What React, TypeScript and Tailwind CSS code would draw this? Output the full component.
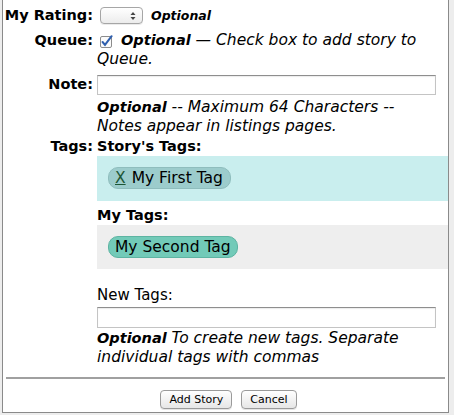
import React from 'react';

const font = { fontFamily: '"DejaVu Sans", Verdana, sans-serif' };

function SelectBox() {
  return (
    <div className="relative mt-[1px] ml-[3px] h-[17px] w-[43px] rounded-[4px] border border-[#a6a6a6] bg-gradient-to-b from-white to-[#ececec] shadow-[0_1px_0_rgba(0,0,0,0.08)]">
      <svg className="absolute top-[3px] right-[6px]" width="6" height="10" viewBox="0 0 6 10">
        <path d="M3 1 L5.5 4 L0.5 4 Z" fill="#444" />
        <path d="M3 9 L5.5 6 L0.5 6 Z" fill="#444" />
      </svg>
    </div>
  );
}

function CheckBox() {
  return (
    <svg className="mt-[4px] ml-[3px] mr-[8px] shrink-0" width="13" height="13" viewBox="0 0 13 13">
      <rect x="0.5" y="1.5" width="11" height="11" rx="1.5" fill="#fbfbfb" stroke="#8c8c8c" />
      <path d="M2.6 7 L5 9.8 L11.6 1.2" fill="none" stroke="#2f5fae" strokeWidth="2" strokeLinecap="round" />
    </svg>
  );
}

function TextField({ className = '' }: { className?: string }) {
  return (
    <div
      className={`w-[339px] border border-[#c4c4c4] border-t-[#8e8e8e] bg-white shadow-[inset_0_1px_1px_rgba(0,0,0,0.08)] ${className}`}
    />
  );
}

function Label({ children }: { children: React.ReactNode }) {
  return (
    <div className="w-[90px] shrink-0 text-right text-[14.5px] leading-[19px] font-bold text-black">
      {children}
    </div>
  );
}

function MacButton({ children }: { children: React.ReactNode }) {
  return (
    <button
      type="button"
      className="h-[19px] rounded-[4px] border border-[#9a9a9a] bg-gradient-to-b from-white to-[#e6e6e6] px-[8px] text-[11px] leading-[17px] text-black shadow-[0_1px_0_rgba(0,0,0,0.1)]"
    >
      {children}
    </button>
  );
}

export default function App() {
  return (
    <div className="h-[415px] w-[454px] bg-[#ededed]" style={font}>
      <div className="ml-[2px] h-[413px] w-[447px] border-x border-b border-[#8a8a8a] bg-white pt-[6px] text-[15px] text-black">
        {/* Rating */}
        <div className="flex items-start gap-[4px]">
          <Label>My Rating:</Label>
          <div className="flex items-start">
            <SelectBox />
            <em className="ml-[8px] text-[12.5px] leading-[19px] font-bold">Optional</em>
          </div>
        </div>

        {/* Queue */}
        <div className="mt-[6px] flex items-start gap-[4px]">
          <Label>Queue:</Label>
          <div className="flex-1 pr-[6px] text-[15.5px] italic leading-[19px]">
            <span className="float-left h-[19px]">
              <CheckBox />
            </span>
            <span className="text-[14.5px] font-bold">Optional</span> — Check box to add story to Queue.
          </div>
        </div>

        {/* Note */}
        <div className="mt-[6px] flex items-start gap-[4px]">
          <Label>Note:</Label>
          <TextField className="h-[20px]" />
        </div>
        <div className="mt-[3px] ml-[94px] pr-[6px] text-[15.5px] italic leading-[19px]">
          <span className="text-[14.5px] font-bold">Optional</span> -- Maximum 64 Characters -- Notes appear
          in listings pages.
        </div>

        {/* Tags */}
        <div className="mt-[1px] flex items-start gap-[4px]">
          <Label>Tags:</Label>
          <div className="flex-1">
            <div className="text-[14.5px] leading-[19px] font-bold">Story's Tags:</div>
            <div className="bg-[#c9eeee] px-[11px] py-[11px]">
              <span className="inline-flex h-[22px] items-center rounded-[10px] border border-[#8fbdbd] bg-[#9ccccc] pr-[7px] pl-[6px] text-[15.5px] leading-[20px]">
                <span className="mr-[6px] text-[#1c5636] underline">X</span>My First Tag
              </span>
            </div>

            <div className="mt-[5px] text-[14.5px] leading-[19px] font-bold">My Tags:</div>
            <div className="bg-[#eeeeee] px-[11px] py-[11px]">
              <span className="inline-flex h-[22px] items-center rounded-[10px] border border-[#5db4a2] bg-[#72cab8] px-[6px] text-[15.5px] leading-[20px]">
                My Second Tag
              </span>
            </div>

            <div className="mt-[17px] leading-[19px]">New Tags:</div>
            <TextField className="mt-[2px] h-[21px]" />
            <div className="mt-[1px] pr-[6px] text-[15.5px] italic leading-[19px]">
              <span className="text-[14.5px] font-bold">Optional</span> To create new tags. Separate individual
              tags with commas
            </div>
          </div>
        </div>

        <hr className="mx-[3px] mt-[10px] border-t-[2px] border-[#a0a0a0]" />

        <div className="mt-[11px] flex justify-center gap-[9px] pl-[6px]">
          <MacButton>Add Story</MacButton>
          <MacButton>Cancel</MacButton>
        </div>
      </div>
    </div>
  );
}
